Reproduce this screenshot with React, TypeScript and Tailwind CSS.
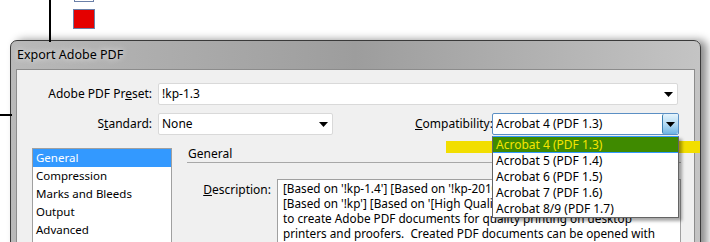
const FONT = "font-['Noto_Sans',sans-serif]"

const PANES = ["General", "Compression", "Marks and Bleeds", "Output", "Advanced"]
const VERSIONS = [
  "Acrobat 4 (PDF 1.3)",
  "Acrobat 5 (PDF 1.4)",
  "Acrobat 6 (PDF 1.5)",
  "Acrobat 7 (PDF 1.6)",
  "Acrobat 8/9 (PDF 1.7)",
]

function Caret({ className = "" }: { className?: string }) {
  return (
    <svg width="9" height="5" viewBox="0 0 9 5" className={className}>
      <path d="M0 0h9L4.5 5z" fill="#000" />
    </svg>
  )
}

function Select({ value, width, open = false }: { value: string; width: string; open?: boolean }) {
  return (
    <div
      className={`flex h-[22px] items-center rounded-[2px] border bg-white pl-[3px] ${width} ${
        open ? "border-[#5b8fc4]" : "border-[#d9d9d9]"
      }`}
    >
      <span className="flex-1 truncate">{value}</span>
      {open ? (
        <div className="flex h-full w-[16px] items-center justify-center rounded-[2px] border-l border-[#3c7fb1] bg-gradient-to-b from-[#e5f4fc] via-[#b4dbf3] to-[#6fb4e3]">
          <Caret />
        </div>
      ) : (
        <div className="flex w-[18px] justify-center">
          <Caret />
        </div>
      )}
    </div>
  )
}

export default function App() {
  return (
    <div className={`relative h-[242px] w-[710px] overflow-hidden bg-white text-[12px] text-black ${FONT}`}>
      {/* stuff behind the dialog */}
      <div className="absolute left-[49px] top-0 h-[42px] w-[2px] bg-black" />
      <div className="absolute left-0 top-[114px] h-[2px] w-[12px] bg-black" />
      <div className="absolute left-[74px] top-[-18px] h-[20px] w-[20px] border border-[#6a7fa8] bg-white" />
      <div className="absolute left-[73px] top-[9px] h-[20px] w-[22px] border border-[#6a7fa8] bg-[#e40000]" />

      {/* dialog */}
      <div className="ml-[10px] mt-[40px] h-[220px] w-[691px] rounded-t-[7px] border border-[#3a3a3a] bg-gradient-to-r from-[#b9b9b9] via-[#9d9d9d] to-[#c4c4c4] px-[5px] shadow-[6px_0_8px_rgba(0,0,0,0.45)]">
        <div className="flex h-[28px] items-center pl-[1px] pt-[1px] text-[12.5px] [text-shadow:0_0_6px_#fff]">
          Export Adobe PDF
        </div>

        <div className="h-[200px] border border-[#8c8c8c] bg-[#f0f0f0] pt-[13px]">
          <div className="flex items-center">
            <div className="w-[135px] text-right">
              Adobe PDF Pr<span className="underline">e</span>set:
            </div>
            <div className="ml-[6px]">
              <Select value="!kp-1.3" width="w-[520px]" />
            </div>
          </div>

          <div className="mt-[8px] flex items-center">
            <div className="w-[135px] text-right">
              S<span className="underline">t</span>andard:
            </div>
            <div className="ml-[6px]">
              <Select value="None" width="w-[175px]" />
            </div>
            <div className="ml-[82px] w-[72px] text-right">
              <span className="underline">C</span>ompatibility:
            </div>
            <div className="ml-[5px]">
              <Select value="Acrobat 4 (PDF 1.3)" width="w-[187px]" open />
            </div>
          </div>

          <div className="mt-[11px] flex">
            <div className="ml-[15px] mt-[2px] h-[120px] w-[140px] border border-[#a0a0a0] bg-white">
              {PANES.map((p, i) => (
                <div
                  key={p}
                  className={`flex h-[18px] items-center pl-[3px] text-[11.5px] ${
                    i === 0 ? "bg-[#3399ff] text-white" : ""
                  }`}
                >
                  {p}
                </div>
              ))}
            </div>

            <div className="ml-[15px] flex-1 pr-[13px]">
              <div className="border-b border-[#a8a8a8] pl-[1px] leading-[16px]">General</div>
              <div className="mt-[16px] flex">
                <div className="w-[84px] pt-[2px] text-right">
                  <span className="underline">D</span>escription:
                </div>
                <div className="ml-[6px] h-[80px] flex-1 overflow-hidden border border-[#a0a0a0] bg-white px-[5px] pt-[1px] text-[11.75px] leading-[15px] whitespace-pre">
                  <div>[Based on '!kp-1.4'] [Based on '!kp-2010'] [Based on</div>
                  <div>[Based on '!kp'] [Based on '[High Quality Print]'] Use these settings</div>
                  <div>to create Adobe PDF documents for quality printing on desktop</div>
                  <div>printers and proofers.  Created PDF documents can be opened with</div>
                </div>
              </div>
            </div>
          </div>
        </div>
      </div>

      {/* highlighter band and open list */}
      <div className="absolute left-[446px] top-[141px] h-[12px] w-[254px] bg-[#f2de00]" />
      <div className="absolute left-[492px] top-[136px] w-[187px] border border-[#646464] border-t-[#3399ff] bg-white shadow-[3px_3px_3px_rgba(0,0,0,0.35)]">
        {VERSIONS.map((v, i) => (
          <div
            key={v}
            className={`flex h-[16px] items-center pl-[3px] ${
              i === 0 ? "border-b border-[#3399ff] bg-[#3f8a00] text-[#f6e600]" : ""
            }`}
          >
            {v}
          </div>
        ))}
      </div>
    </div>
  )
}
